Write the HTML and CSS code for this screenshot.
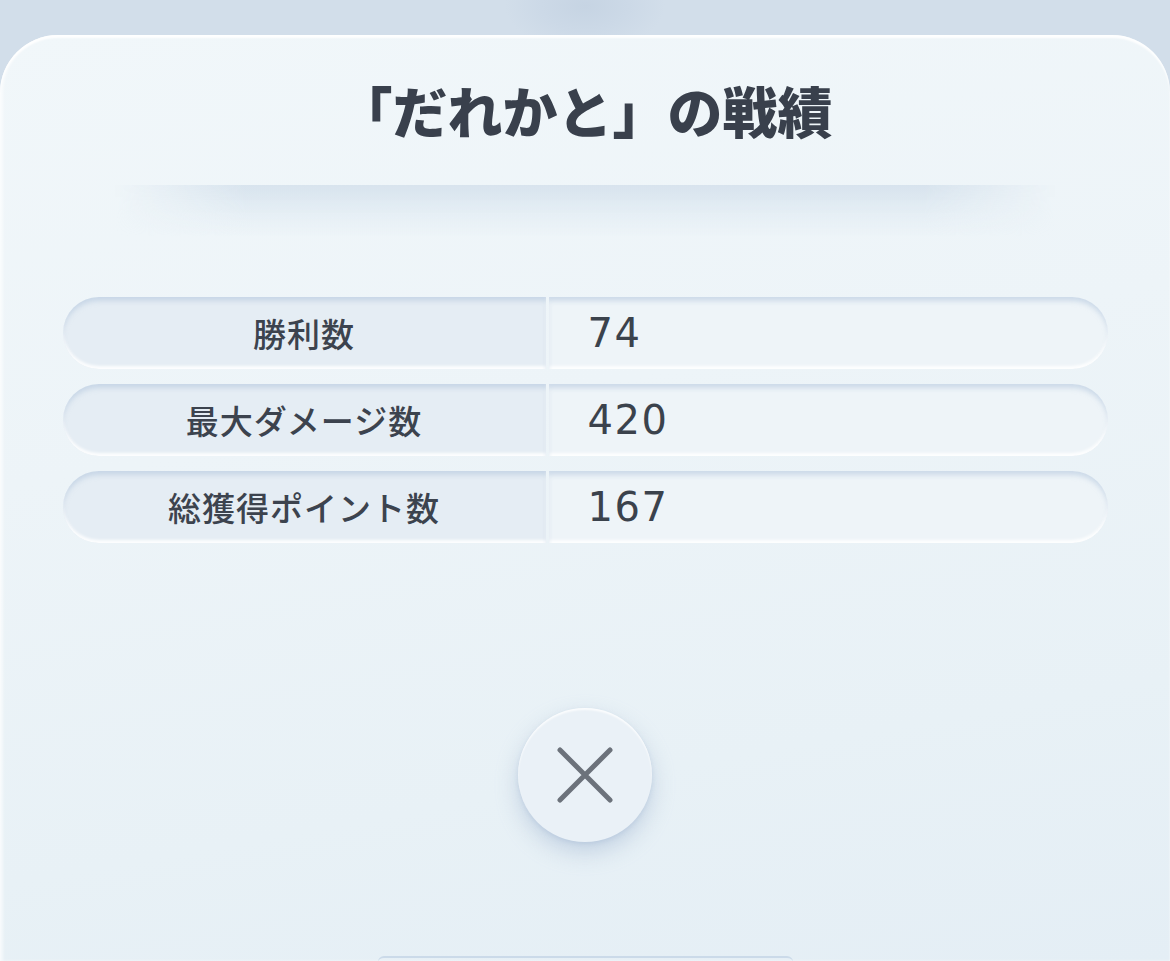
FILE: index.html
```html
<!DOCTYPE html>
<html lang="ja">
<head>
    <meta charset="UTF-8">
    <title>「だれかと」の戦績</title>
    <link rel="stylesheet" href="styles.css">
</head>
<body>
    <div class="panel">
        <h1 class="title">「だれかと」の戦績</h1>
        <div class="title-shade"></div>

        <ul class="stats">
            <li class="stat">
                <span class="stat-label">勝利数</span>
                <span class="stat-value">74</span>
            </li>
            <li class="stat">
                <span class="stat-label">最大ダメージ数</span>
                <span class="stat-value">420</span>
            </li>
            <li class="stat">
                <span class="stat-label">総獲得ポイント数</span>
                <span class="stat-value">167</span>
            </li>
        </ul>

        <button class="close" type="button" aria-label="閉じる">
            <svg width="56" height="56" viewBox="0 0 56 56">
                <path d="M3 3 L53 53 M53 3 L3 53" stroke="#6c727b" stroke-width="5" stroke-linecap="round" fill="none"/>
            </svg>
        </button>

        <div class="next-sheet"></div>
    </div>
</body>
</html>
```

FILE: styles.css
```css
*{
    margin: 0;
    padding: 0;
    box-sizing: border-box;
}
body{
    width: 1170px;
    height: 961px;
    overflow: hidden;
    padding-top: 35px;
    font-family: "Noto Sans CJK JP", sans-serif;
    background:
        radial-gradient(ellipse 80px 45px at 585px 6px, #c6d4e3 0%, #ccd9e7 55%, rgba(210,222,234,0) 100%),
        #d2deea;
}
.panel{
    height: 926px;
    border-radius: 58px 58px 0 0;
    background: linear-gradient(170deg, #f1f7fa 0%, #edf4f8 40%, #e8f1f6 75%, #e4eef5 100%);
    box-shadow: inset 0 3px 2px rgba(255,255,255,.9), inset 3px 0 3px rgba(255,255,255,.6);
    display: flex;
    flex-direction: column;
    align-items: center;
}
.panel > *{
    flex-shrink: 0;
}
.title{
    margin-top: 47px;
    font-size: 55px;
    line-height: 55px;
    font-weight: 900;
    color: #39404c;
}
/* soft ledge under the heading */
.title-shade{
    margin-top: 48px;
    width: 940px;
    height: 52px;
    background: linear-gradient(180deg, rgba(196,212,228,.55) 0%, rgba(214,227,238,.45) 45%, rgba(236,244,249,0) 100%);
    -webkit-mask-image: linear-gradient(90deg, transparent 0%, #000 14%, #000 86%, transparent 100%);
    mask-image: linear-gradient(90deg, transparent 0%, #000 14%, #000 86%, transparent 100%);
}
.stats{
    list-style: none;
    margin-top: 60px;
    display: flex;
    flex-direction: column;
    gap: 15px;
}
.stat{
    width: 1045px;
    height: 72px;
    display: grid;
    grid-template-columns: 483px 1fr;
    gap: 3px;
}
.stat-label,
.stat-value{
    display: flex;
    align-items: center;
    box-shadow:
        inset 0 5px 5px -1px rgba(176,196,220,.55),
        inset 0 -3px 3px rgba(255,255,255,.9);
}
.stat-label{
    justify-content: center;
    border-radius: 36px 0 0 36px;
    background: #e5edf4;
    font-size: 33px;
    font-weight: 500;
    color: #3c434e;
    letter-spacing: 1px;
}
.stat-value{
    padding-left: 39px;
    border-radius: 0 36px 36px 0;
    background: #eef4f8;
    font-family: "DejaVu Sans", sans-serif;
    font-size: 40px;
    color: #3b424c;
    letter-spacing: 1.5px;
}
.close{
    margin-top: 165px;
    width: 134px;
    height: 134px;
    border: none;
    border-radius: 50%;
    background: #eaf1f7;
    box-shadow:
        0 10px 22px rgba(150,174,204,.45),
        0 2px 4px rgba(170,190,214,.35),
        inset 0 2px 2px rgba(255,255,255,.8);
    display: flex;
    align-items: center;
    justify-content: center;
}
.next-sheet{
    margin-top: 114px;
    width: 415px;
    height: 40px;
    border-top: 2px solid #cbdae9;
    border-radius: 6px 6px 0 0;
}
```
